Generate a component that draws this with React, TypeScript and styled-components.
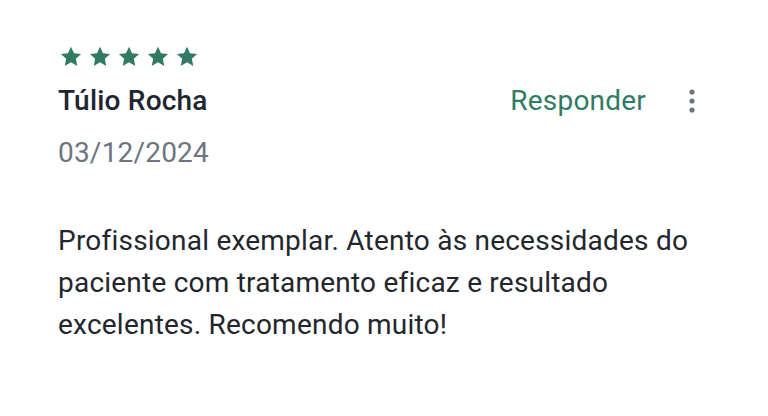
import React from "react";
import styled, { createGlobalStyle } from "styled-components";

const Global = createGlobalStyle`
  html, body { margin: 0; padding: 0; background: #ffffff; }
  body { font-family: Roboto, "Noto Sans", sans-serif; -webkit-font-smoothing: antialiased; }
`;

const Card = styled.div`
  width: 768px;
  height: 416px;
  box-sizing: border-box;
  padding: 44px 71px 0 58px;
  background: #ffffff;
`;

const Stars = styled.div`
  display: flex;
  gap: 7px;
  height: 24px;
  align-items: center;
  margin-left: 2px;
`;

const HeaderRow = styled.div`
  display: flex;
  align-items: center;
  justify-content: space-between;
  margin-top: 13px;
`;

const Name = styled.div`
  font-size: 28px;
  font-weight: 500;
  letter-spacing: 0.2px;
  color: #20252f;
  line-height: 40px;
`;

const Actions = styled.div`
  display: flex;
  align-items: center;
  gap: 41px;
`;

const ReplyButton = styled.button`
  border: none;
  background: none;
  padding: 0;
  font-family: inherit;
  font-size: 28px;
  letter-spacing: 0.2px;
  color: #317a64;
  line-height: 40px;
  cursor: pointer;
`;

const MoreButton = styled.button`
  border: none;
  background: none;
  padding: 0;
  width: 10px;
  height: 30px;
  display: flex;
  align-items: center;
  justify-content: center;
`;

const DateText = styled.div`
  font-size: 28px;
  letter-spacing: 0.2px;
  color: #6e7480;
  line-height: 40px;
  margin-top: 12px;
`;

const Body = styled.p`
  margin: 47px 0 0;
  font-size: 28px;
  letter-spacing: 0.22px;
  line-height: 42px;
  color: #23262d;
  max-width: 650px;
`;

const Star = () => (
  <svg width="22" height="21" viewBox="0 0 24 23">
    <path
      d="M12 0.8l3.3 7.1 7.8.9-5.8 5.3 1.6 7.7L12 17.9l-6.9 3.9 1.6-7.7L.9 8.8l7.8-.9z"
      fill="#317a64"
    />
  </svg>
);

export default function App() {
  return (
    <>
      <Global />
      <Card>
        <Stars>
          {[0, 1, 2, 3, 4].map((i) => (
            <Star key={i} />
          ))}
        </Stars>
        <HeaderRow>
          <Name>Túlio Rocha</Name>
          <Actions>
            <ReplyButton>Responder</ReplyButton>
            <MoreButton aria-label="Mais opções">
              <svg width="6" height="24" viewBox="0 0 6 24">
                <circle cx="3" cy="3" r="2.6" fill="#6e7480" />
                <circle cx="3" cy="12" r="2.6" fill="#6e7480" />
                <circle cx="3" cy="21" r="2.6" fill="#6e7480" />
              </svg>
            </MoreButton>
          </Actions>
        </HeaderRow>
        <DateText>03/12/2024</DateText>
        <Body>
          Profissional exemplar. Atento às necessidades do paciente com tratamento eficaz e
          resultado excelentes. Recomendo muito!
        </Body>
      </Card>
    </>
  );
}
